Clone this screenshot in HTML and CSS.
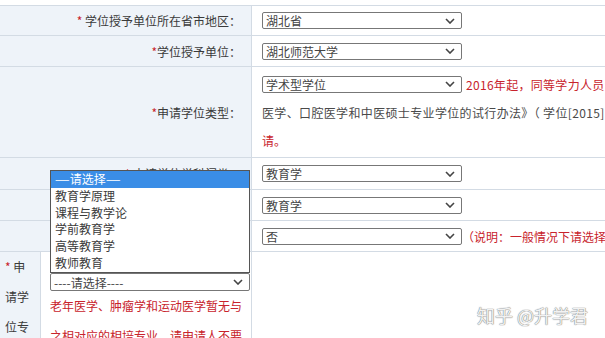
FILE: index.html
```html
<!DOCTYPE html>
<html lang="zh-CN">
<head>
    <meta charset="UTF-8">
    <meta name="viewport" content="width=device-width, initial-scale=1.0">
    <title>同等学力申请信息</title>
    <link rel="stylesheet" href="styles.css">
</head>
<body>
    <div class="apply-form">
        <div class="row r1">
            <div class="label"><span class="star">*</span>&nbsp;学位授予单位所在省市地区：</div>
            <div class="field">
                <div class="select"><span>湖北省</span><svg class="arrow" width="10" height="6" viewBox="0 0 10 6"><path d="M1 1l4 4 4-4" fill="none" stroke="#444" stroke-width="1.6"/></svg></div>
            </div>
        </div>

        <div class="row r2">
            <div class="label"><span class="star">*</span>学位授予单位：</div>
            <div class="field">
                <div class="select"><span>湖北师范大学</span><svg class="arrow" width="10" height="6" viewBox="0 0 10 6"><path d="M1 1l4 4 4-4" fill="none" stroke="#444" stroke-width="1.6"/></svg></div>
            </div>
        </div>

        <div class="row r3">
            <div class="label"><span class="star">*</span>申请学位类型：</div>
            <div class="field field-stack">
                <div class="line-first">
                    <div class="select"><span>学术型学位</span><svg class="arrow" width="10" height="6" viewBox="0 0 10 6"><path d="M1 1l4 4 4-4" fill="none" stroke="#444" stroke-width="1.6"/></svg></div>
                    <span class="note note-side">2016年起，同等学力人员申请临床医学硕士专业学位按照《关于授予具有研究生毕业同等学力人员临床</span>
                </div>
                <div class="line grey">医学、口腔医学和中医硕士专业学位的试行办法》（ 学位[2015]10号）执行，请按新办法提出申</div>
                <div class="line note">请。</div>
            </div>
        </div>

        <div class="row r4">
            <div class="label"><span class="star">*</span>&nbsp;申请学位学科门类：</div>
            <div class="field">
                <div class="select"><span>教育学</span><svg class="arrow" width="10" height="6" viewBox="0 0 10 6"><path d="M1 1l4 4 4-4" fill="none" stroke="#444" stroke-width="1.6"/></svg></div>
            </div>
        </div>

        <div class="row r5">
            <div class="label"><span class="star">*</span>&nbsp;一级学科：</div>
            <div class="field">
                <div class="select"><span>教育学</span><svg class="arrow" width="10" height="6" viewBox="0 0 10 6"><path d="M1 1l4 4 4-4" fill="none" stroke="#444" stroke-width="1.6"/></svg></div>
            </div>
        </div>

        <div class="row r6">
            <div class="label"><span class="star">*</span>&nbsp;是否跨学科：</div>
            <div class="field">
                <div class="select"><span>否</span><svg class="arrow" width="10" height="6" viewBox="0 0 10 6"><path d="M1 1l4 4 4-4" fill="none" stroke="#444" stroke-width="1.6"/></svg></div>
                <span class="note">（说明：一般情况下请选择“否”）</span>
            </div>
        </div>

        <div class="row r7">
            <div class="sub">
                <div class="sub-label"><span class="star">*</span> 申请学位专业：</div>
                <div class="sub-field">
                    <div class="select select-wide"><span>----请选择----</span><svg class="arrow" width="10" height="6" viewBox="0 0 10 6"><path d="M1 1l4 4 4-4" fill="none" stroke="#444" stroke-width="1.6"/></svg></div>
                    <p class="note sub-note">老年医学、肿瘤学和运动医学暂无与之相对应的相培专业，请申请人不要选择。</p>
                </div>
            </div>
            <div class="field"></div>
        </div>

        <!-- open dropdown of the major select -->
        <ul class="dropdown">
            <li class="active"><span class="dash">—</span>请选择<span class="dash">—</span></li>
            <li>教育学原理</li>
            <li>课程与教学论</li>
            <li>学前教育学</li>
            <li>高等教育学</li>
            <li>教师教育</li>
        </ul>

        <div class="watermark">知乎 @升学君</div>
    </div>
</body>
</html>
```

FILE: styles.css
```css
* {
    margin: 0;
    padding: 0;
    box-sizing: border-box;
}

body {
    font-family: "Noto Sans CJK SC", "Noto Sans", sans-serif;
    font-size: 12px;
    color: #3a3a3a;
    background: #fff;
    overflow: hidden;
}

.apply-form {
    position: relative;
    width: 900px;
    padding-top: 5px;
}

.row {
    display: flex;
    border-top: 1px solid #d3dbe4;
}

.r1 { height: 30px; }
.r2 { height: 31px; }
.r3 { height: 91px; }
.r4 { height: 32px; }
.r5 { height: 31px; }
.r6 { height: 31px; }
.r7 { height: 100px; }

.label {
    width: 252px;
    flex: none;
    background: #eef3f9;
    border-right: 1px solid #d3dbe4;
    display: flex;
    align-items: center;
    justify-content: flex-end;
    padding-right: 10px;
    white-space: nowrap;
}

.star {
    color: #c8232c;
}

.field {
    flex: 1;
    display: flex;
    align-items: center;
    padding-left: 10px;
    background: #fff;
}

.field-stack {
    flex-direction: column;
    align-items: flex-start;
    padding-top: 8px;
}

.line-first {
    display: flex;
    align-items: center;
    height: 18px;
    margin-bottom: 6px;
}

.line {
    line-height: 28px;
    white-space: nowrap;
}

.grey {
    color: #4a4a4a;
    letter-spacing: 0.35px;
}

.note {
    color: #c8232c;
    white-space: nowrap;
}

.note-side {
    margin-left: 4px;
    letter-spacing: 0.3px;
}

.select {
    width: 200px;
    height: 17px;
    flex: none;
    border: 1px solid #777;
    border-radius: 2px;
    background: #fff;
    display: flex;
    align-items: center;
    justify-content: space-between;
    padding: 0 6px 0 3px;
    color: #444;
    line-height: 15px;
}

.arrow {
    display: block;
}

.sub {
    width: 252px;
    flex: none;
    display: flex;
    border-right: 1px solid #d3dbe4;
}

.sub-label {
    width: 41px;
    flex: none;
    background: #eef3f9;
    border-right: 1px solid #d3dbe4;
    padding: 0 5px;
    line-height: 30px;
}

.sub-field {
    flex: 1;
    padding: 21px 1px 0 9px;
}

.select-wide {
    height: 18px;
}

.sub-note {
    line-height: 30px;
    white-space: normal;
}

.dropdown {
    position: absolute;
    left: 50px;
    top: 170px;
    width: 200px;
    height: 103px;
    list-style: none;
    background: #fff;
    border: 1px solid #555;
    color: #3a3a3a;
}

.dropdown li {
    height: 16.8px;
    line-height: 16.8px;
    padding-left: 4px;
}

.dropdown .active {
    background: #3a8de6;
    color: #fff;
}

.dash {
    display: inline-block;
    transform: scaleX(1.4);
    margin: 0 2px;
}

.watermark {
    position: absolute;
    left: 477px;
    top: 302px;
    font-size: 18px;
    color: #f2f2f2;
    text-shadow: 0 0 1px #7a7a7a, 0 0 1px #7a7a7a;
}
```
